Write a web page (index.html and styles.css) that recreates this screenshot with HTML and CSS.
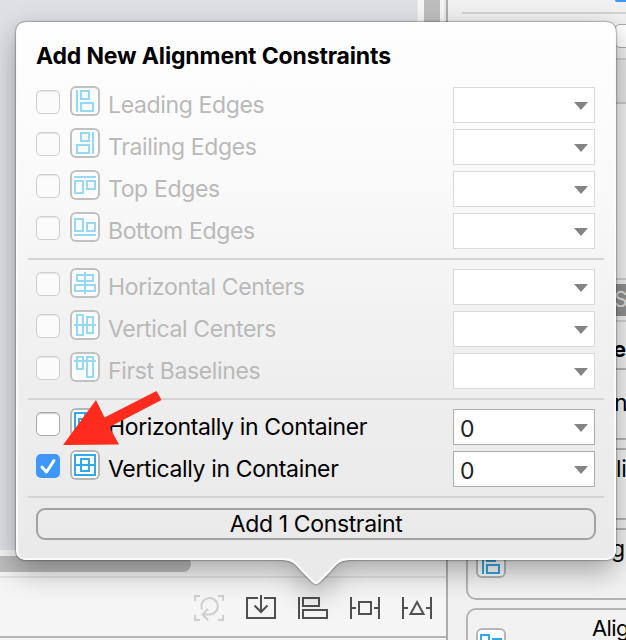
FILE: index.html
```html
<!DOCTYPE html>
<html lang="en">
<head>
<meta charset="utf-8">
<title>Add New Alignment Constraints</title>
<link rel="stylesheet" href="styles.css">
</head>
<body>
<svg class="defs" width="0" height="0">
  <symbol id="leading" viewBox="0 0 30 30"><path d="M7 4V26M11 5H19V13H11ZM11 17H23V25H11Z"/></symbol>
  <symbol id="trailing" viewBox="0 0 30 30"><path d="M23 4V26M11 5H19V13H11ZM7 17H19V25H7Z"/></symbol>
  <symbol id="top" viewBox="0 0 30 30"><path d="M4 7H26M5 11H13V23H5ZM17 11H25V19H17Z"/></symbol>
  <symbol id="bottom" viewBox="0 0 30 30"><path d="M4 23H26M5 7H13V19H5ZM17 11H25V19H17Z"/></symbol>
  <symbol id="hcenter" viewBox="0 0 30 30"><path d="M15 4V26M7 7H23V13H7ZM5 17H25V23H5Z"/></symbol>
  <symbol id="vcenter" viewBox="0 0 30 30"><path d="M4 15H26M7 5H13V25H7ZM17 7H23V23H17Z"/></symbol>
  <symbol id="baseline" viewBox="0 0 30 30"><path d="M4 9H26M7 5H13V17H7ZM17 5H23V25H17Z"/></symbol>
  <symbol id="hcontainer" viewBox="0 0 30 30"><path d="M5 5H25V25H5ZM9 11H21V19H9ZM15 4V26"/></symbol>
  <symbol id="vcontainer" viewBox="0 0 30 30"><path d="M5 5H25V25H5ZM11 9H19V21H11ZM4 15H26"/></symbol>
</svg>
<div class="window">
  <main class="editor">
    <div class="canvas-row"><div class="canvas"></div><div class="vscroll"><div class="vthumb"></div></div></div>
    <div class="hscroll"><div class="hthumb"></div></div>
    <div class="toolbar">
      <svg class="tool off" viewBox="0 0 30 26"><path d="M1 6V1H6M24 1H29V6M29 20V25H24M6 25H1V20M8 14.5A8.2 8.2 0 1 1 15 19.5H9M14 14L8.5 19.5L14 25"/></svg>
      <svg class="tool" viewBox="0 0 30 26"><path d="M12 3H1V23H29V3H18M15 0V17M8.500 10.500L15 17L21.500 10.500"/></svg>
      <svg class="tool" viewBox="0 0 30 26"><path d="M1 2V24M5 3H21V11H5ZM5 15H29V23H5Z"/></svg>
      <svg class="tool" viewBox="0 0 30 26"><path d="M1 2V24M29 2V24M1 13H6M24 13H29M9 7H21V19H9Z"/></svg>
      <svg class="tool" viewBox="0 0 30 26"><path d="M1 2V24M29 2V24M1 13H6M24 13H29M15 7L21.500 19H8.500Z"/></svg>
    </div>
    <div class="footer"></div>
  </main>
  <aside class="inspector">
    <div class="field-row"><span class="check-edge"></span></div>
    <div class="button-row"><span class="button-edge"></span></div>
    <div class="band"></div>
    <div class="pane"></div>
    <div class="tab">S</div>
    <div class="heading">es</div>
    <div class="cards">
      <div class="card"><span class="name">n</span></div>
      <div class="card"><span class="name li">li</span></div>
      <div class="card"><svg class="icon"><use href="#leading"/></svg><span class="name gn">gn</span></div>
      <div class="card"><svg class="icon"><use href="#bottom"/></svg><span class="name al">Alig</span></div>
    </div>
  </aside>
</div>

<section class="popover">
  <svg class="shell" width="600" height="564" viewBox="0 0 600 564">
    <defs>
      <linearGradient id="face" x1="0" y1="0" x2="0" y2="1"><stop offset="0" stop-color="#fefefe"/><stop offset=".22" stop-color="#fbfbfb"/><stop offset=".65" stop-color="#eeeeee"/><stop offset="1" stop-color="#e9e9e9"/></linearGradient>
    </defs>
    <path class="body" d="M11 0H589Q600 0 600 11V527Q600 538 589 538H334C324 538 321 542 315 549L303 561Q300 563 297 561L285 549C279 542 276 538 266 538H11Q0 538 0 527V11Q0 0 11 0Z"/>
    <path class="rim" d="M1 11V527Q1 537 11 537H266C277 537 280 541 286 548L298 560Q300 562 302 560L314 548C320 541 323 537 334 537H589Q599 537 599 527V11"/>
  </svg>
  <div class="content">
    <h1>Add New Alignment Constraints</h1>
    <div class="group">
      <div class="row off"><i class="box"></i><svg class="icon"><use href="#leading"/></svg><span class="label">Leading Edges</span><div class="combo"></div></div>
      <div class="row off"><i class="box"></i><svg class="icon"><use href="#trailing"/></svg><span class="label">Trailing Edges</span><div class="combo"></div></div>
      <div class="row off"><i class="box"></i><svg class="icon"><use href="#top"/></svg><span class="label">Top Edges</span><div class="combo"></div></div>
      <div class="row off"><i class="box"></i><svg class="icon"><use href="#bottom"/></svg><span class="label">Bottom Edges</span><div class="combo"></div></div>
    </div>
    <div class="group">
      <div class="row off"><i class="box"></i><svg class="icon"><use href="#hcenter"/></svg><span class="label">Horizontal Centers</span><div class="combo"></div></div>
      <div class="row off"><i class="box"></i><svg class="icon"><use href="#vcenter"/></svg><span class="label">Vertical Centers</span><div class="combo"></div></div>
      <div class="row off"><i class="box"></i><svg class="icon"><use href="#baseline"/></svg><span class="label">First Baselines</span><div class="combo"></div></div>
    </div>
    <div class="group">
      <div class="row"><i class="box"></i><svg class="icon"><use href="#hcontainer"/></svg><span class="label">Horizontally in Container</span><div class="combo">0</div></div>
      <div class="row"><i class="box on"><svg viewBox="0 0 24 24"><path d="M6 13L10.500 18L18 6.500"/></svg></i><svg class="icon"><use href="#vcontainer"/></svg><span class="label">Vertically in Container</span><div class="combo">0</div></div>
    </div>
    <div class="add">Add 1 Constraint</div>
  </div>
  <svg class="arrow" viewBox="0 0 100 56"><path d="M0 54L33 9L41.500 26.500L93.500 0L98.500 9L46.500 36L56 53.500Z"/></svg>
</section>
</body>
</html>
```

FILE: styles.css
```css
* { box-sizing: border-box; }
body { margin: 0; width: 626px; height: 640px; overflow: hidden; font-family: Inter, "Liberation Sans", sans-serif; font-size: 23px; letter-spacing: -.36px; color: #000; }
.defs { position: absolute; }
.window { display: grid; grid-template-columns: 446px 180px; height: 640px; }

.editor { display: flex; flex-direction: column; background: #f5f5f5; }
.canvas-row { display: flex; height: 550px; }
.canvas { width: 418px; background: #dfe0e5; border-right: 1px solid #e9e9e9; }
.vscroll { width: 28px; padding-left: 6px; background: #f5f5f5; border-right: 2px solid #e6e6e6; }
.vthumb { width: 16px; height: 550px; background: #bdbdbd; }
.hscroll { height: 28px; padding-top: 6px; border-bottom: 2px solid #e2e2e2; }
.hthumb { width: 191px; height: 16px; background: #bdbdbd; border-radius: 0 8px 8px 0; }
.toolbar { display: flex; gap: 22px; height: 60px; padding: 17px 0 0 194px; border-bottom: 2px solid #b5b5b5; }
.tool { width: 30px; height: 26px; fill: none; stroke: #505050; stroke-width: 2; }
.tool.off { stroke: #cfcfcf; }

.inspector { display: flex; flex-direction: column; border-left: 2px solid #adadad; background: #f0f0f0; overflow: hidden; height: 640px; }
.inspector > * { flex: none; }
.field-row { height: 14px; margin-left: 14px; border-bottom: 2px solid #d2d2d2; }
.check-edge { display: block; width: 24px; height: 2px; margin-left: 153px; background: #3b99fc; border-radius: 0 0 0 4px; }
.button-row { height: 46px; padding: 10px 0 0 166px; border-bottom: 2px solid #cfcfcf; }
.button-edge { display: block; width: 40px; height: 24px; background: #fff; border: 1px solid #aaa; border-radius: 6px; }
.band { height: 44px; background: #e6e6e6; border-bottom: 2px solid #cacaca; }
.pane { height: 176px; background: #f2f2f2; border-bottom: 2px solid #cfcfcf; margin-bottom: 4px; }
.tab { height: 32px; line-height: 31px; padding-left: 166px; background: #919191; color: #e0e0e0; font-size: 21px; }
.heading { height: 52px; margin-top: 4px; padding: 13px 0 0 165px; border-top: 2px solid #d0d0d0; line-height: 28px; font-weight: 700; font-size: 22px; }
.cards { display: grid; grid-auto-rows: 72px; gap: 8px; margin: -4px 0 0 18px; }
.card { display: flex; width: 180px; padding: 18px 0 0 8px; border: 2px solid #b4b4b4; border-radius: 10px; background: #f2f2f2; }
.name { margin: -6px 0 0 138px; line-height: 42px; height: 42px; }
.name.li { margin: -20px 0 0 140px; }
.name.gn { margin: -20px 0 0 105px; }
.name.al { margin: -21px 0 0 86px; font-size: 22px; letter-spacing: -.6px; }

.icon { flex: none; width: 30px; height: 30px; border-radius: 6px; background: #fff; box-shadow: inset 0 0 0 2px #b6b6b6; fill: none; stroke: #32a9e9; stroke-width: 2; }

.popover { position: absolute; left: 16px; top: 22px; width: 600px; height: 564px; }
.shell { position: absolute; left: 0; top: 0; overflow: visible; filter: drop-shadow(0 0 1px rgba(0,0,0,.65)) drop-shadow(0 11px 14px rgba(0,0,0,.32)); }
.body { fill: url(#face); }
.rim { fill: none; stroke: #fbfbfb; stroke-width: 2; }
.content { position: relative; padding: 18px 12px 0; }
h1 { margin: 0 0 0 8px; height: 46px; line-height: 32px; font-size: 23px; font-weight: 700; letter-spacing: -.15px; white-space: nowrap; }
.group { display: grid; grid-auto-rows: 36px; gap: 6px; padding: 1px 9px 9px 8px; margin-bottom: 8px; border-bottom: 2px solid #d4d4d4; }
.row { display: flex; align-items: flex-start; }
.box { flex: none; width: 24px; height: 24px; margin: 3px 10px 0 0; border: 1px solid #aaa; border-radius: 5px; background: #fff; box-shadow: inset 0 1px 1px #ccc; }
.box.on { border: 0; background: #3e98fb; box-shadow: none; }
.box svg { display: block; width: 24px; height: 24px; fill: none; stroke: #fff; stroke-width: 3; stroke-linecap: round; stroke-linejoin: round; }
.row .icon { margin-top: -1px; }
.label { flex: 1; margin-left: 8px; height: 36px; line-height: 36px; white-space: nowrap; }
.combo { position: relative; flex: none; width: 142px; height: 36px; padding-left: 6px; line-height: 38px; background: #fff; border: 1px solid #adadad; color: #222; }
.combo::after { content: ""; position: absolute; right: 6px; top: 14px; border: 7px solid transparent; border-top: 8px solid #848484; border-bottom: 0; }
.off .label { color: #b9b9b9; }
.off .box { border-color: #cfcfcf; background: #fbfbfb; box-shadow: inset 0 1px 1px #e5e5e5; }
.off .icon { stroke: #95d9f5; background: #fbfbfb; box-shadow: inset 0 0 0 2px #c1c1c1; }
.off .combo { border-color: #dadada; }
.add { height: 32px; margin: 10px 8px 0; border: 2px solid #a2a2a2; border-radius: 9px; text-align: center; line-height: 29px; }
.arrow { position: absolute; left: 47px; top: 369px; width: 100px; height: 56px; fill: #ff2b1c; }
```
